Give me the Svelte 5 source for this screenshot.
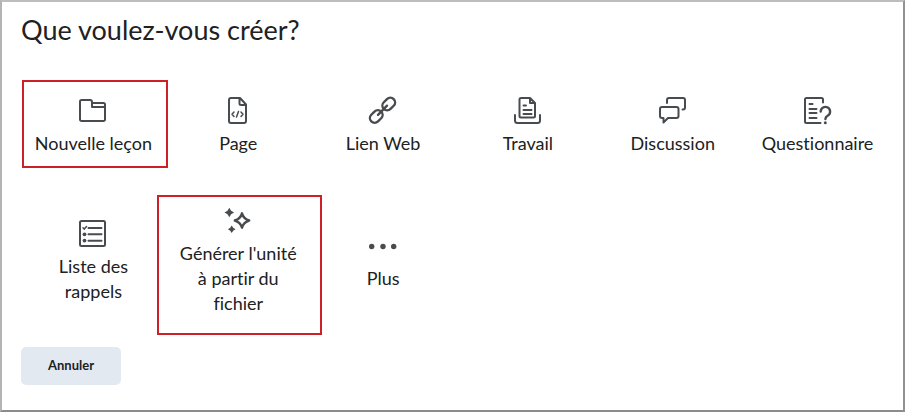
<script>
  const items = [
    { icon: 'folder', label: 'Nouvelle leçon', mark: 'lesson' },
    { icon: 'page', label: 'Page' },
    { icon: 'link', label: 'Lien Web' },
    { icon: 'assignment', label: 'Travail' },
    { icon: 'discussion', label: 'Discussion' },
    { icon: 'quiz', label: 'Questionnaire' },
    { icon: 'checklist', label: 'Liste des rappels' },
    { icon: 'sparkle', label: "Générer l'unité à partir du fichier", mark: 'generate' },
    { icon: 'more', label: 'Plus' }
  ];
</script>

<main class="dialog">
  <h1>Que voulez-vous créer?</h1>

  <div class="grid">
    {#each items as item}
      <button type="button" class="item {item.mark ?? ''}" class:marked={item.mark}>
        <svg class="icon" viewBox="0 0 30 30" aria-hidden="true">
          {#if item.icon === 'folder'}
            <path d="M3.5 4H12a2 2 0 0 1 2 2v1h11.5A1.5 1.5 0 0 1 27 8.500V23.500a1.500 1.500 0 0 1-1.500 1.500h-22A1.500 1.500 0 0 1 2 23.500v-18A1.500 1.500 0 0 1 3.500 4zM14 7v4h13" />
          {:else if item.icon === 'page'}
            <path d="M8 2h9l6 6.500V25a2 2 0 0 1-2 2H8a2 2 0 0 1-2-2V4a2 2 0 0 1 2-2zM16.500 2.500v5a1.500 1.500 0 0 0 1.500 1.500h5" />
            <path class="thin" d="M11 16L9 18.200l2 2.200M18 16l2 2.200-2 2.200M15.500 15.500l-2 5.500" />
          {:else if item.icon === 'link'}
            <rect class="thick" x="13.750" y="3.250" width="14" height="9.500" rx="4.750" transform="rotate(-45 20.750 8)" />
            <rect class="thick" x="1.250" y="15.750" width="14" height="9.500" rx="4.750" transform="rotate(-45 8.250 20.500)" />
            <path class="thick" d="M10 18.800L19 9.700" />
          {:else if item.icon === 'assignment'}
            <path d="M8 2h9l5 5v13a1.500 1.500 0 0 1-1.500 1.500H8A1.500 1.500 0 0 1 6.500 20V3.500A1.500 1.500 0 0 1 8 2zM17 2v5h5" />
            <path d="M10.500 9.500H13M10.500 14h8M10.500 18h8M2 19v5.500A2.500 2.500 0 0 0 4.500 27h20a2.500 2.500 0 0 0 2.500-2.500V19" />
          {:else if item.icon === 'discussion'}
            <path d="M9 7V4a2 2 0 0 1 2-2h14a2 2 0 0 1 2 2v7.500a2 2 0 0 1-2 2h-.5" />
            <path d="M4 11h14.500a2 2 0 0 1 2 2v7a2 2 0 0 1-2 2H10l-4.500 4.500V22H4a2 2 0 0 1-2-2v-7a2 2 0 0 1 2-2z" />
          {:else if item.icon === 'quiz'}
            <path d="M20 6.500V3.500A1.500 1.500 0 0 0 18.500 2h-15A1.500 1.500 0 0 0 2 3.500v22A1.500 1.500 0 0 0 3.500 27H17.500" />
            <path d="M6.500 8h3M6.500 13h7M6.500 17h7M6.500 22h7" />
            <path class="thick" d="M17.700 15.500a4.700 4.700 0 1 1 7 4.200c-1.500.8-2.300 1.300-2.300 3.300" />
            <circle class="fill" cx="22.300" cy="26.700" r="1.500" />
          {:else if item.icon === 'checklist'}
            <rect x="2" y="2" width="25" height="25" rx="1.500" />
            <path d="M10.500 9h13M10.500 15.300h13M10.500 21.700h13" />
            <path class="thin" d="M5 8.800l1.300 1.300L8.500 7.500" />
            <circle class="fill" cx="6.500" cy="15.300" r="1.900" />
            <circle class="fill" cx="6.500" cy="21.600" r="1.900" />
          {:else if item.icon === 'sparkle'}
            <path class="thick" d="M19 7.300Q20.600 12.900 26.200 14.500Q20.600 16.100 19 21.700Q17.400 16.100 11.800 14.500Q17.400 12.900 19 7.300z" />
            <path class="fill" d="M6.300 1.700L8.100 4.700L11.100 6.500L8.100 8.300L6.300 11.300L4.500 8.300L1.500 6.500L4.500 4.700z" />
            <path class="fill" d="M8.700 19.500L10.200 21.800L12.500 23.300L10.200 24.800L8.700 27.100L7.200 24.800L4.900 23.300L7.200 21.800z" />
          {:else}
            <circle class="fill" cx="3.700" cy="15.500" r="2.700" />
            <circle class="fill" cx="15" cy="15.500" r="2.700" />
            <circle class="fill" cx="25.700" cy="15.500" r="2.700" />
          {/if}
        </svg>
        <span>{item.label}</span>
      </button>
    {/each}
  </div>

  <button type="button" class="cancel">Annuler</button>
</main>

<style>
  :global(body) {
    margin: 0;
    background: #fff;
  }
  .dialog {
    box-sizing: border-box;
    min-height: 100vh;
    padding: 10px 13px 24px 19px;
    border: 2px solid;
    border-color: #bdbdbd #929292 #8c8c8c #b4b4b4;
    font-family: Lato, 'Open Sans', sans-serif;
    font-variant-ligatures: none;
    color: #202122;
  }
  h1 {
    margin: 0 0 48px;
    font-size: 27px;
    font-weight: 400;
    line-height: 36px;
  }
  .grid {
    display: grid;
    grid-template-columns: repeat(6, minmax(0, 1fr));
    row-gap: 50px;
    align-items: center;
  }
  .item {
    position: relative;
    display: flex;
    flex-direction: column;
    align-items: center;
    gap: 5px;
    padding: 0 12px;
    border: 0;
    background: none;
    color: inherit;
    font: inherit;
    font-size: 18px;
    font-variant-ligatures: none;
    line-height: 25px;
    text-align: center;
    cursor: pointer;
  }
  .item:hover {
    color: #006fbf;
  }

  /* red callout frames around the two highlighted choices */
  .marked::before {
    content: '';
    position: absolute;
    border: 2px solid #cd2027;
  }
  .lesson::before {
    inset: -16px -2px -12px 1px;
  }
  .generate::before {
    inset: -11px -11px -19px -9px;
  }

  .icon {
    width: 30px;
    height: 30px;
    fill: none;
    stroke: #494c4e;
    stroke-width: 2;
    stroke-linecap: round;
    stroke-linejoin: round;
  }
  .icon .thin {
    stroke-width: 1.5;
  }
  .icon .thick {
    stroke-width: 2.4;
  }
  .icon .fill {
    fill: #494c4e;
    stroke: none;
  }

  .cancel {
    display: block;
    margin-top: 31px;
    padding: 8px 27px 10px;
    border: 0;
    border-radius: 5px;
    background: #e3e9f1;
    color: #202122;
    font-family: inherit;
    font-size: 13px;
    font-weight: 700;
    line-height: 20px;
    cursor: pointer;
  }
  .cancel:hover {
    background: #cdd5dc;
  }
</style>
